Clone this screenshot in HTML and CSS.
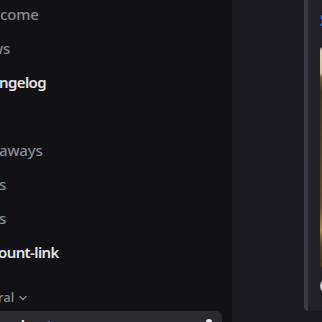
FILE: index.html
```html
<!DOCTYPE html>
<html lang="en">
<head>
<meta charset="utf-8">
<title>Channels</title>
<link rel="stylesheet" href="styles.css">
</head>
<body>
<div class="app">
  <nav class="sidebar">
    <ul class="channels">
      <li class="channel"><span class="name">come</span></li>
      <li class="channel"><span class="name cut-w">ws</span></li>
      <li class="channel unread"><span class="name cut-1">ngelog</span></li>
      <li class="channel"><span class="name"></span></li>
      <li class="channel"><span class="name cut-1">aways</span></li>
      <li class="channel"><span class="name cut-1">s</span></li>
      <li class="channel"><span class="name cut-1">s</span></li>
      <li class="channel unread"><span class="name cut-o">ount-link</span></li>
    </ul>
    <div class="category">
      <span class="cat-name">ral</span>
      <svg class="chevron" width="8" height="6" viewBox="0 0 8 6"><path d="M1 1.5 L4 4.5 L7 1.5" fill="none" stroke="#8d8d94" stroke-width="1.3" stroke-linecap="round" stroke-linejoin="round"/></svg>
    </div>
    <div class="selected">
      <span class="sel-name">el-cat</span>
      <svg class="sel-icon" width="16" height="16" viewBox="0 0 16 16"><circle cx="8" cy="5" r="3" fill="#e6e6ea"/><path d="M2 14c0-3 3-5 6-5s6 2 6 5z" fill="#e6e6ea"/></svg>
    </div>
  </nav>
  <main class="chat">
    <div class="embed">
      <div class="embed-title">Summer Giveaway</div>
      <div class="embed-image"></div>
      <div class="embed-footer"><span class="footer-icon"></span></div>
    </div>
  </main>
</div>
</body>
</html>
```

FILE: styles.css
```css
* { box-sizing: border-box; }
html, body {
  margin: 0;
  padding: 0;
  width: 322px;
  height: 322px;
  overflow: hidden;
  background: #121214;
  font-family: "Noto Sans", "DejaVu Sans", sans-serif;
}
.app {
  display: flex;
  width: 322px;
  height: 322px;
  overflow: hidden;
}
.sidebar {
  width: 232px;
  flex: none;
  background: #121214;
  display: flex;
  flex-direction: column;
}
.sidebar > * { flex: none; }
.channels {
  list-style: none;
  margin: -3px 0 0 0;
  padding: 0;
}
.channel {
  height: 34px;
  line-height: 34px;
  font-size: 15px;
  font-weight: 500;
  letter-spacing: -0.2px;
  color: #8b8b92;
  white-space: nowrap;
}
.channel.unread {
  color: #e4e4e8;
  font-weight: 600;
  letter-spacing: -0.6px;
}
.name { display: inline-block; }
.cut-w { margin-left: -9px; }
.cut-1 { margin-left: -1px; }
.cut-o { margin-left: -2px; }
.category {
  margin-top: 16px;
  height: 24px;
  display: flex;
  align-items: center;
  gap: 5px;
  font-size: 13px;
  font-weight: 500;
  color: #8d8d94;
}
.cat-name { margin-left: -2px; }
.chevron { margin-top: 2px; }
.selected {
  margin-top: 2px;
  width: 222px;
  height: 34px;
  background: #2a2a2f;
  border-radius: 0 6px 6px 0;
  display: flex;
  align-items: flex-start;
  justify-content: space-between;
  padding: 0 5px 0 12px;
}
.sel-name {
  line-height: 28px;
  font-size: 15px;
  font-weight: 600;
  color: #f0f0f2;
}
.sel-icon { margin-top: 6px; }
.chat {
  flex: 1;
  background: #1b1b1f;
  padding-left: 72px;
}
.embed {
  height: 311px;
  background: #232327;
  border-left: 4px solid #3a3a40;
  border-radius: 0 0 4px 4px;
  padding: 10px 0 0 12px;
  display: flex;
  flex-direction: column;
  overflow: hidden;
}
.embed > * { flex: none; }
.embed-title {
  font-size: 16px;
  line-height: 20px;
  font-weight: 600;
  color: #3d82de;
  white-space: nowrap;
}
.embed-image {
  margin-top: 17px;
  height: 221px;
  width: 300px;
  border-radius: 4px 0 0 4px;
  background: linear-gradient(to bottom,
    #dccfb5 0, #d0c19f 26px, #6a5c3c 30px, #3a3322 45px,
    #4d4128 110px, #5e4d28 160px, #a89048 183px, #7a6430 190px,
    #4a3f22 200px, #3b3420 215px, #4e4426 221px);
}
.embed-footer {
  margin-top: 10px;
  display: flex;
}
.footer-icon {
  width: 16px;
  height: 16px;
  border-radius: 50%;
  background: #c9c9cc;
}
```
